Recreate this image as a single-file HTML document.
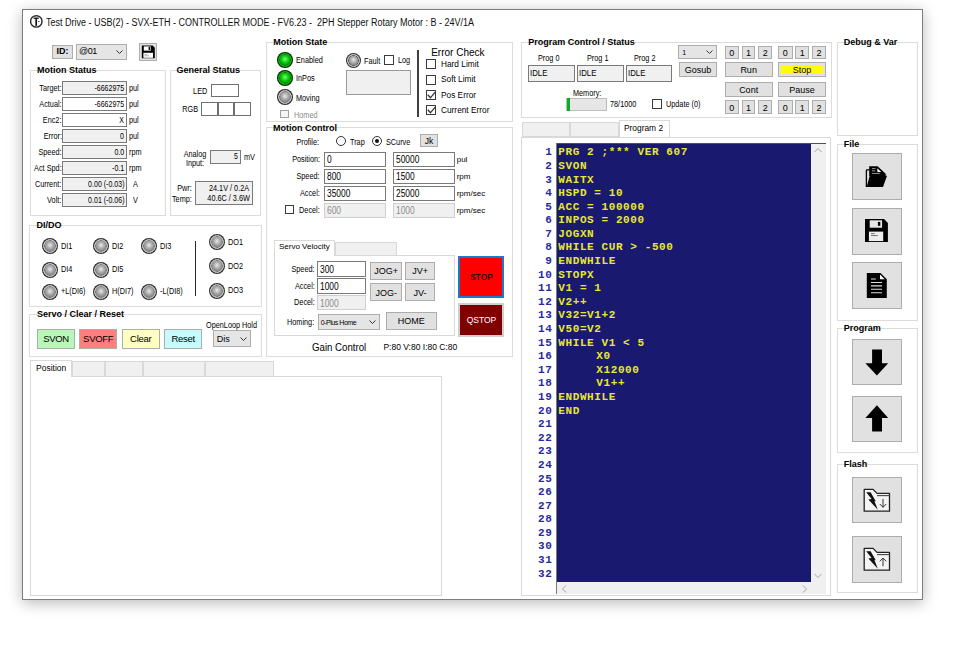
<!DOCTYPE html><html><head><meta charset="utf-8"><style>
*{margin:0;padding:0;box-sizing:border-box}
html,body{width:968px;height:646px;overflow:hidden;background:#fff;font-family:"Liberation Sans",sans-serif;color:#000}
body>div,body>svg{position:absolute}
.win{border:1px solid #7d7d7d;background:#fff;box-shadow:0 3px 14px rgba(0,0,0,0.28)}
.t{position:absolute;font-size:8px;line-height:0;white-space:nowrap}
.r{text-align:right}
.c{transform:translateX(-50%)}
.grp{border:1px solid #dcdcdc}
.gt{position:absolute;font-size:9px;font-weight:bold;background:#fff;padding:0 2px;line-height:0;white-space:nowrap}
.tb{border:1px solid #7a7a7a;font-size:8px;padding:0 2px;white-space:nowrap;overflow:hidden}
.btn{border:1px solid #adadad;background:#e1e1e1;font-size:9px;text-align:center;white-space:nowrap;overflow:hidden;padding-top:1px}
.led{border-radius:50%;background:radial-gradient(circle closest-side at 50% 50%,rgba(0,0,0,0) 64%,#5a5a5a 67%,#c4c4c4 73%,#acacac 83%,#3a3a3a 88%,#2a2a2a 100%),radial-gradient(circle closest-side at 50% 45%,#ececec 0%,#b8b8b8 35%,#8a8a8a 75%,#707070 100%)}
.led.g{background:radial-gradient(circle closest-side at 50% 50%,rgba(0,0,0,0) 64%,#005a00 67%,#10c010 73%,#00a000 83%,#0e3a0e 88%,#0a2a0a 100%),radial-gradient(circle closest-side at 50% 45%,#80ff80 0%,#22e022 35%,#00a000 75%,#008000 100%)}
.chk{border:1px solid #3c3c3c;background:#fff}
.dd{border:1px solid #adadad;background:#e5e5e5;font-size:8px;padding:0 3px;white-space:nowrap;overflow:hidden}
.tab{border:1px solid #d9d9d9;background:#f0f0f0}
.tabs{border:1px solid #d9d9d9;border-bottom:none;background:#fff}
.pan{border:1px solid #d9d9d9;background:#fff}
</style></head><body>
<div class="win" style="left:22.0px;top:9.0px;width:901.2px;height:590.5px;"></div>
<svg style="left:28px;top:13px" width="17" height="17" viewBox="28 13 17 17"><circle cx="36.3" cy="21.4" r="5.7" stroke="#2a2a2a" stroke-width="1.4" fill="none"/><path d="M33.6 18.2 H38.8" stroke="#111" stroke-width="1.3"/><path d="M36.2 18 V25.9" stroke="#111" stroke-width="1.7"/><path d="M38 21.5 h1.6" stroke="#444" stroke-width="0.9"/></svg>
<div class="t" style="left:46.3px;top:22.6px;font-size:10px;color:#111;transform:scaleX(0.9);transform-origin:0 0">Test Drive - USB(2) - SVX-ETH - CONTROLLER MODE - FV6.23 -&nbsp; 2PH Stepper Rotary Motor : B - 24V/1A</div>
<div class="btn" style="left:52.0px;top:45.0px;width:21.0px;height:14.0px;font-weight:bold;font-size:9px;line-height:11.5px;padding-top:0">ID:</div>
<div class="dd" style="left:76.0px;top:44.0px;width:51.0px;height:16.0px;line-height:13px;font-size:9px;letter-spacing:-0.5px;padding-left:2px">@01</div>
<svg style="position:absolute;left:115.5px;top:50.2px" width="7" height="4.5" viewBox="0 0 7 4.5"><path d="M0.5 0.5 L3.5 3.5 L6.5 0.5" stroke="#333" stroke-width="1" fill="none"/></svg>
<div class="btn" style="left:139.0px;top:43.0px;width:18.0px;height:18.0px;"></div>
<svg style="left:139px;top:43px" width="18" height="18" viewBox="139 43 18 18"><path d="M141.8 45.6 H152.6 L154.8 47.8 V58.2 H141.8 Z" fill="#000"/><rect x="143.8" y="46.4" width="7" height="4.2" fill="#fff"/><rect x="148.6" y="46.9" width="1.6" height="3" fill="#000"/><rect x="143.4" y="52.8" width="9.6" height="5" fill="#fff"/><path d="M144.4 54.3 h3 M144.4 55.8 h4.5" stroke="#777" stroke-width="0.6"/></svg>
<div class="grp" style="left:30.0px;top:70.0px;width:136.0px;height:146.0px;"></div>
<div class="gt" style="left:35.0px;top:70.2px;">Motion Status</div>
<div class="t r" style="right:906.5px;top:88.0px;font-size:8.4px;transform:scaleX(0.87);transform-origin:100% 0;">Target:</div>
<div class="tb" style="left:62.0px;top:81.0px;width:65.3px;height:14.0px;background:#f0f0f0;text-align:right;line-height:12.0px;font-size:8.8px;line-height:12.3px"><span style="display:inline-block;transform:scaleX(0.8);transform-origin:100% 50%">-6662975</span></div>
<div class="t" style="left:128.5px;top:88.2px;font-size:8.4px;transform:scaleX(0.87);transform-origin:0 0;">pul</div>
<div class="t r" style="right:906.5px;top:104.0px;font-size:8.4px;transform:scaleX(0.87);transform-origin:100% 0;">Actual:</div>
<div class="tb" style="left:62.0px;top:97.0px;width:65.3px;height:14.0px;background:#fff;text-align:right;line-height:12.0px;font-size:8.8px;line-height:12.3px"><span style="display:inline-block;transform:scaleX(0.8);transform-origin:100% 50%">-6662975</span></div>
<div class="t" style="left:128.5px;top:104.2px;font-size:8.4px;transform:scaleX(0.87);transform-origin:0 0;">pul</div>
<div class="t r" style="right:906.5px;top:120.0px;font-size:8.4px;transform:scaleX(0.87);transform-origin:100% 0;">Enc2:</div>
<div class="tb" style="left:62.0px;top:113.0px;width:65.3px;height:14.0px;background:#fff;text-align:right;line-height:12.0px;font-size:8.8px;line-height:12.3px"><span style="display:inline-block;transform:scaleX(0.8);transform-origin:100% 50%">X</span></div>
<div class="t" style="left:128.5px;top:120.2px;font-size:8.4px;transform:scaleX(0.87);transform-origin:0 0;">pul</div>
<div class="t r" style="right:906.5px;top:136.0px;font-size:8.4px;transform:scaleX(0.87);transform-origin:100% 0;">Error:</div>
<div class="tb" style="left:62.0px;top:129.0px;width:65.3px;height:14.0px;background:#f0f0f0;text-align:right;line-height:12.0px;font-size:8.8px;line-height:12.3px"><span style="display:inline-block;transform:scaleX(0.8);transform-origin:100% 50%">0</span></div>
<div class="t" style="left:128.5px;top:136.2px;font-size:8.4px;transform:scaleX(0.87);transform-origin:0 0;">pul</div>
<div class="t r" style="right:906.5px;top:152.0px;font-size:8.4px;transform:scaleX(0.87);transform-origin:100% 0;">Speed:</div>
<div class="tb" style="left:62.0px;top:145.0px;width:65.3px;height:14.0px;background:#f0f0f0;text-align:right;line-height:12.0px;font-size:8.8px;line-height:12.3px"><span style="display:inline-block;transform:scaleX(0.8);transform-origin:100% 50%">0.0</span></div>
<div class="t" style="left:128.5px;top:152.2px;font-size:8.4px;transform:scaleX(0.87);transform-origin:0 0;">rpm</div>
<div class="t r" style="right:906.5px;top:168.0px;font-size:8.4px;transform:scaleX(0.87);transform-origin:100% 0;">Act Spd:</div>
<div class="tb" style="left:62.0px;top:161.0px;width:65.3px;height:14.0px;background:#f0f0f0;text-align:right;line-height:12.0px;font-size:8.8px;line-height:12.3px"><span style="display:inline-block;transform:scaleX(0.8);transform-origin:100% 50%">-0.1</span></div>
<div class="t" style="left:128.5px;top:168.2px;font-size:8.4px;transform:scaleX(0.87);transform-origin:0 0;">rpm</div>
<div class="t r" style="right:906.5px;top:184.0px;font-size:8.4px;transform:scaleX(0.87);transform-origin:100% 0;">Current:</div>
<div class="tb" style="left:62.0px;top:177.0px;width:65.3px;height:14.0px;background:#f0f0f0;text-align:right;line-height:12.0px;font-size:8.8px;line-height:12.3px"><span style="display:inline-block;transform:scaleX(0.8);transform-origin:100% 50%">0.00 (-0.03)</span></div>
<div class="t" style="left:132.5px;top:184.2px;font-size:8.4px;transform:scaleX(0.87);transform-origin:0 0;">A</div>
<div class="t r" style="right:906.5px;top:200.0px;font-size:8.4px;transform:scaleX(0.87);transform-origin:100% 0;">Volt:</div>
<div class="tb" style="left:62.0px;top:193.0px;width:65.3px;height:14.0px;background:#f0f0f0;text-align:right;line-height:12.0px;font-size:8.8px;line-height:12.3px"><span style="display:inline-block;transform:scaleX(0.8);transform-origin:100% 50%">0.01 (-0.06)</span></div>
<div class="t" style="left:132.5px;top:200.2px;font-size:8.4px;transform:scaleX(0.87);transform-origin:0 0;">V</div>
<div class="grp" style="left:170.0px;top:70.0px;width:90.5px;height:146.0px;"></div>
<div class="gt" style="left:174.5px;top:70.2px;">General Status</div>
<div class="t r" style="right:760.5px;top:90.5px;font-size:8.4px;transform:scaleX(0.87);transform-origin:100% 0;">LED</div>
<div class="tb" style="left:211.0px;top:84.0px;width:28.0px;height:13.0px;background:#fff;border-color:#707070"></div>
<div class="t r" style="right:770.0px;top:109.0px;font-size:8.4px;transform:scaleX(0.87);transform-origin:100% 0;">RGB</div>
<div class="tb" style="left:201.0px;top:102.0px;width:16.6px;height:14.0px;background:#fff;border-color:#707070"></div>
<div class="tb" style="left:217.6px;top:102.0px;width:16.6px;height:14.0px;background:#fff;border-color:#707070"></div>
<div class="tb" style="left:234.2px;top:102.0px;width:16.6px;height:14.0px;background:#fff;border-color:#707070"></div>
<div class="t c" style="left:194.5px;top:153.5px;font-size:8.4px;transform:translateX(-50%) scaleX(0.87);">Analog</div>
<div class="t c" style="left:194.5px;top:162.5px;font-size:8.4px;transform:translateX(-50%) scaleX(0.87);">Input:</div>
<div class="tb" style="left:210.0px;top:150.0px;width:30.5px;height:13.5px;background:#f0f0f0;text-align:right;line-height:11.5px;font-size:8.8px;line-height:11px"><span style="display:inline-block;transform:scaleX(0.8);transform-origin:100% 50%">5</span></div>
<div class="t" style="left:244.0px;top:157.0px;font-size:8.4px;transform:scaleX(0.87);transform-origin:0 0;">mV</div>
<div class="t r" style="right:776.0px;top:188.0px;font-size:8.4px;transform:scaleX(0.87);transform-origin:100% 0;">Pwr:</div>
<div class="t r" style="right:776.0px;top:198.5px;font-size:8.4px;transform:scaleX(0.87);transform-origin:100% 0;">Temp:</div>
<div class="tb" style="left:195.0px;top:181.0px;width:57.5px;height:23.5px;background:#f0f0f0"></div>
<div class="t r" style="right:718.5px;top:187.5px;font-size:8.4px;transform:scaleX(0.87);transform-origin:100% 0;">24.1V / 0.2A</div>
<div class="t r" style="right:718.5px;top:197.5px;font-size:8.4px;transform:scaleX(0.87);transform-origin:100% 0;">40.6C / 3.6W</div>
<div class="grp" style="left:29.0px;top:225.0px;width:232.5px;height:82.0px;"></div>
<div class="gt" style="left:34.5px;top:225.2px;">DI/DO</div>
<div class="led" style="left:42.3px;top:238.0px;width:16.0px;height:16.0px;"></div>
<div class="t" style="left:60.8px;top:245.8px;font-size:8.4px;transform:scaleX(0.87);transform-origin:0 0;">DI1</div>
<div class="led" style="left:93.4px;top:238.0px;width:16.0px;height:16.0px;"></div>
<div class="t" style="left:111.9px;top:245.8px;font-size:8.4px;transform:scaleX(0.87);transform-origin:0 0;">DI2</div>
<div class="led" style="left:141.0px;top:238.0px;width:16.0px;height:16.0px;"></div>
<div class="t" style="left:159.5px;top:245.8px;font-size:8.4px;transform:scaleX(0.87);transform-origin:0 0;">DI3</div>
<div class="led" style="left:42.3px;top:261.5px;width:16.0px;height:16.0px;"></div>
<div class="t" style="left:60.8px;top:269.3px;font-size:8.4px;transform:scaleX(0.87);transform-origin:0 0;">DI4</div>
<div class="led" style="left:93.4px;top:261.5px;width:16.0px;height:16.0px;"></div>
<div class="t" style="left:111.9px;top:269.3px;font-size:8.4px;transform:scaleX(0.87);transform-origin:0 0;">DI5</div>
<div class="led" style="left:42.3px;top:283.5px;width:16.0px;height:16.0px;"></div>
<div class="t" style="left:60.8px;top:291.3px;font-size:8.4px;transform:scaleX(0.87);transform-origin:0 0;">+L(DI6)</div>
<div class="led" style="left:93.4px;top:283.5px;width:16.0px;height:16.0px;"></div>
<div class="t" style="left:111.9px;top:291.3px;font-size:8.4px;transform:scaleX(0.87);transform-origin:0 0;">H(DI7)</div>
<div class="led" style="left:141.0px;top:283.5px;width:16.0px;height:16.0px;"></div>
<div class="t" style="left:159.5px;top:291.3px;font-size:8.4px;transform:scaleX(0.87);transform-origin:0 0;">-L(DI8)</div>
<div class="led" style="left:209.4px;top:234.4px;width:16.0px;height:16.0px;"></div>
<div class="t" style="left:228.4px;top:241.9px;font-size:8.4px;transform:scaleX(0.87);transform-origin:0 0;">DO1</div>
<div class="led" style="left:209.4px;top:258.2px;width:16.0px;height:16.0px;"></div>
<div class="t" style="left:228.4px;top:265.7px;font-size:8.4px;transform:scaleX(0.87);transform-origin:0 0;">DO2</div>
<div class="led" style="left:209.4px;top:282.5px;width:16.0px;height:16.0px;"></div>
<div class="t" style="left:228.4px;top:290.0px;font-size:8.4px;transform:scaleX(0.87);transform-origin:0 0;">DO3</div>
<div class="" style="left:195.2px;top:240.5px;width:1.2px;height:55.0px;background:#2a2a2a"></div>
<div class="grp" style="left:29.0px;top:314.0px;width:232.5px;height:43.0px;"></div>
<div class="gt" style="left:35.0px;top:314.2px;">Servo / Clear / Reset</div>
<div class="btn" style="left:37.0px;top:328.6px;width:38.0px;height:20.0px;line-height:18.0px;background:#b8f7b8;font-size:9.5px;letter-spacing:-0.3px;padding-top:0.3px">SVON</div>
<div class="btn" style="left:79.0px;top:328.6px;width:38.4px;height:20.0px;line-height:18.0px;background:#ff7f7f;font-size:9.5px;letter-spacing:-0.3px;padding-top:0.3px">SVOFF</div>
<div class="btn" style="left:121.7px;top:328.6px;width:38.0px;height:20.0px;line-height:18.0px;background:#ffffc0;font-size:9.5px;letter-spacing:-0.3px;padding-top:0.3px">Clear</div>
<div class="btn" style="left:164.2px;top:328.6px;width:38.0px;height:20.0px;line-height:18.0px;background:#c6fafd;font-size:9.5px;letter-spacing:-0.3px;padding-top:0.3px">Reset</div>
<div class="t" style="left:205.5px;top:324.5px;font-size:8.4px;transform:scaleX(0.87);transform-origin:0 0;">OpenLoop Hold</div>
<div class="dd" style="left:212.8px;top:330.0px;width:38.0px;height:17.0px;line-height:16.5px;font-size:9px">Dis</div>
<svg style="position:absolute;left:240.0px;top:336.8px" width="7" height="4.5" viewBox="0 0 7 4.5"><path d="M0.5 0.5 L3.5 3.5 L6.5 0.5" stroke="#333" stroke-width="1" fill="none"/></svg>
<div class="pan" style="left:30.0px;top:376.0px;width:412.0px;height:219.5px;"></div>
<div class="tab" style="left:71.8px;top:361.0px;width:32.9px;height:15.5px;"></div>
<div class="tab" style="left:104.7px;top:361.0px;width:38.0px;height:15.5px;"></div>
<div class="tab" style="left:142.7px;top:361.0px;width:62.0px;height:15.5px;"></div>
<div class="tab" style="left:204.7px;top:361.0px;width:69.2px;height:15.5px;"></div>
<div class="tabs" style="left:30.0px;top:359.5px;width:41.8px;height:17.5px;"></div>
<div class="t" style="left:36.0px;top:367.8px;font-size:8.5px">Position</div>
<div class="grp" style="left:265.6px;top:41.8px;width:247.4px;height:80.0px;"></div>
<div class="gt" style="left:271.2px;top:42.0px;">Motion State</div>
<div class="led g" style="left:277.0px;top:52.0px;width:15.6px;height:15.6px;"></div>
<div class="t" style="left:295.9px;top:60.0px;font-size:8.4px;transform:scaleX(0.87);transform-origin:0 0;">Enabled</div>
<div class="led g" style="left:277.0px;top:70.1px;width:15.6px;height:15.6px;"></div>
<div class="t" style="left:295.9px;top:78.0px;font-size:8.4px;transform:scaleX(0.87);transform-origin:0 0;">InPos</div>
<div class="led" style="left:277.0px;top:89.2px;width:15.6px;height:15.6px;"></div>
<div class="t" style="left:295.9px;top:97.5px;font-size:8.4px;transform:scaleX(0.87);transform-origin:0 0;">Moving</div>
<div class="chk" style="left:280.2px;top:109.7px;width:8.8px;height:8.8px;border-color:#a0a0a0;background:#f5f5f5"></div>
<div class="t" style="left:293.9px;top:114.5px;font-size:8.4px;transform:scaleX(0.87);transform-origin:0 0;color:#8a8a8a">Homed</div>
<div class="led" style="left:345.6px;top:52.8px;width:15.6px;height:15.6px;"></div>
<div class="t" style="left:364.0px;top:61.0px;font-size:8.4px;transform:scaleX(0.87);transform-origin:0 0;">Fault</div>
<div class="chk" style="left:384.0px;top:55.3px;width:10.2px;height:10.2px;"></div>
<div class="t" style="left:398.4px;top:59.8px;font-size:8.4px;transform:scaleX(0.87);transform-origin:0 0;">Log</div>
<div class="tb" style="left:345.5px;top:70.2px;width:65.5px;height:24.8px;background:#f0f0f0;border-color:#9a9a9a"></div>
<div class="" style="left:416.8px;top:49.8px;width:1.8px;height:67.5px;background:#404040"></div>
<div class="t" style="left:431.2px;top:52.5px;font-size:10px">Error Check</div>
<div class="chk" style="left:425.5px;top:59.4px;width:10.0px;height:10.0px;"></div>
<div class="t" style="left:441.0px;top:64.0px;font-size:8.3px">Hard Limit</div>
<div class="chk" style="left:425.5px;top:74.7px;width:10.0px;height:10.0px;"></div>
<div class="t" style="left:441.0px;top:79.2px;font-size:8.3px">Soft Limit</div>
<div class="chk" style="left:425.5px;top:89.9px;width:10.0px;height:10.0px;"><svg width="10" height="10" viewBox="0 0 10 10" style="position:absolute;left:-1px;top:-1px"><path d="M1.8 4.8 L4.4 7.8 L9.2 2.2" stroke="#333" stroke-width="1.3" fill="none"/></svg></div>
<div class="t" style="left:441.0px;top:94.5px;font-size:8.3px">Pos Error</div>
<div class="chk" style="left:425.5px;top:105.2px;width:10.0px;height:10.0px;"><svg width="10" height="10" viewBox="0 0 10 10" style="position:absolute;left:-1px;top:-1px"><path d="M1.8 4.8 L4.4 7.8 L9.2 2.2" stroke="#333" stroke-width="1.3" fill="none"/></svg></div>
<div class="t" style="left:441.0px;top:109.8px;font-size:8.3px">Current Error</div>
<div class="grp" style="left:265.7px;top:127.3px;width:247.5px;height:229.7px;"></div>
<div class="gt" style="left:271.0px;top:127.5px;">Motion Control</div>
<div class="t r" style="right:648.5px;top:141.8px;font-size:8.4px;transform:scaleX(0.87);transform-origin:100% 0;">Profile:</div>
<div class="" style="left:335.8px;top:136.4px;width:10.0px;height:10.0px;border:1px solid #333;border-radius:50%;background:#fff"></div>
<div class="t" style="left:350.2px;top:142.0px;font-size:8.4px;transform:scaleX(0.87);transform-origin:0 0;">Trap</div>
<div class="" style="left:371.9px;top:136.4px;width:10.0px;height:10.0px;border:1px solid #333;border-radius:50%;background:#fff"></div>
<div class="" style="left:374.9px;top:139.4px;width:4.0px;height:4.0px;border-radius:50%;background:#111"></div>
<div class="t" style="left:386.3px;top:142.0px;font-size:8.4px;transform:scaleX(0.87);transform-origin:0 0;">SCurve</div>
<div class="btn" style="left:420.2px;top:133.8px;width:17.8px;height:13.5px;line-height:11.5px;font-size:8.5px;line-height:11px">Jk</div>
<div class="t r" style="right:648.0px;top:159.1px;font-size:8.4px;transform:scaleX(0.87);transform-origin:100% 0;">Position:</div>
<div class="tb" style="left:324.1px;top:151.6px;width:62.2px;height:15.0px;background:#fff;text-align:left;line-height:13.0px;font-size:10px;line-height:14px;"><span style="display:inline-block;transform:scaleX(0.84);transform-origin:0 50%">0</span></div>
<div class="tb" style="left:393.0px;top:151.6px;width:61.8px;height:15.0px;background:#fff;text-align:left;line-height:13.0px;font-size:10px;line-height:14px;"><span style="display:inline-block;transform:scaleX(0.84);transform-origin:0 50%">50000</span></div>
<div class="t" style="left:456.7px;top:160.1px;font-size:8px">pul</div>
<div class="t r" style="right:648.0px;top:176.1px;font-size:8.4px;transform:scaleX(0.87);transform-origin:100% 0;">Speed:</div>
<div class="tb" style="left:324.1px;top:168.6px;width:62.2px;height:15.0px;background:#fff;text-align:left;line-height:13.0px;font-size:10px;line-height:14px;"><span style="display:inline-block;transform:scaleX(0.84);transform-origin:0 50%">800</span></div>
<div class="tb" style="left:393.0px;top:168.6px;width:61.8px;height:15.0px;background:#fff;text-align:left;line-height:13.0px;font-size:10px;line-height:14px;"><span style="display:inline-block;transform:scaleX(0.84);transform-origin:0 50%">1500</span></div>
<div class="t" style="left:456.7px;top:177.1px;font-size:8px">rpm</div>
<div class="t r" style="right:648.0px;top:193.1px;font-size:8.4px;transform:scaleX(0.87);transform-origin:100% 0;">Accel:</div>
<div class="tb" style="left:324.1px;top:185.6px;width:62.2px;height:15.0px;background:#fff;text-align:left;line-height:13.0px;font-size:10px;line-height:14px;"><span style="display:inline-block;transform:scaleX(0.84);transform-origin:0 50%">35000</span></div>
<div class="tb" style="left:393.0px;top:185.6px;width:61.8px;height:15.0px;background:#fff;text-align:left;line-height:13.0px;font-size:10px;line-height:14px;"><span style="display:inline-block;transform:scaleX(0.84);transform-origin:0 50%">25000</span></div>
<div class="t" style="left:456.7px;top:194.1px;font-size:8px">rpm/sec</div>
<div class="t r" style="right:648.0px;top:210.1px;font-size:8.4px;transform:scaleX(0.87);transform-origin:100% 0;">Decel:</div>
<div class="tb" style="left:324.1px;top:202.6px;width:62.2px;height:15.0px;background:#f0f0f0;text-align:left;line-height:13.0px;font-size:10px;line-height:14px;color:#8c8c8c;border-color:#cfcfcf;"><span style="display:inline-block;transform:scaleX(0.84);transform-origin:0 50%">600</span></div>
<div class="tb" style="left:393.0px;top:202.6px;width:61.8px;height:15.0px;background:#f0f0f0;text-align:left;line-height:13.0px;font-size:10px;line-height:14px;color:#8c8c8c;border-color:#cfcfcf;"><span style="display:inline-block;transform:scaleX(0.84);transform-origin:0 50%">1000</span></div>
<div class="t" style="left:456.7px;top:211.1px;font-size:8px">rpm/sec</div>
<div class="chk" style="left:285.3px;top:205.2px;width:9.2px;height:8.8px;"></div>
<div class="pan" style="left:273.7px;top:255.3px;width:181.1px;height:81.2px;"></div>
<div class="tab" style="left:335.4px;top:242.0px;width:61.4px;height:13.8px;"></div>
<div class="tabs" style="left:273.7px;top:240.0px;width:61.7px;height:16.3px;"></div>
<div class="t" style="left:279.0px;top:247.0px;font-size:8px">Servo Velocity</div>
<div class="t r" style="right:653.5px;top:268.5px;font-size:8.4px;transform:scaleX(0.87);transform-origin:100% 0;">Speed:</div>
<div class="tb" style="left:317.3px;top:260.8px;width:48.3px;height:15.9px;background:#fff;text-align:left;line-height:13.9px;font-size:10px;line-height:16px"><span style="display:inline-block;transform:scaleX(0.84);transform-origin:0 50%">300</span></div>
<div class="t r" style="right:653.5px;top:285.5px;font-size:8.4px;transform:scaleX(0.87);transform-origin:100% 0;">Accel:</div>
<div class="tb" style="left:317.3px;top:278.3px;width:48.3px;height:15.3px;background:#fff;text-align:left;line-height:13.3px;font-size:10px;line-height:16px"><span style="display:inline-block;transform:scaleX(0.84);transform-origin:0 50%">1000</span></div>
<div class="t r" style="right:653.5px;top:302.0px;font-size:8.4px;transform:scaleX(0.87);transform-origin:100% 0;">Decel:</div>
<div class="tb" style="left:317.3px;top:294.8px;width:48.3px;height:15.7px;background:#f0f0f0;text-align:left;line-height:13.7px;font-size:10px;line-height:16px;color:#8c8c8c;border-color:#cfcfcf"><span style="display:inline-block;transform:scaleX(0.84);transform-origin:0 50%">1000</span></div>
<div class="btn" style="left:370.2px;top:261.8px;width:32.0px;height:17.9px;line-height:15.9px;">JOG+</div>
<div class="btn" style="left:405.1px;top:261.8px;width:29.9px;height:17.9px;line-height:15.9px;">JV+</div>
<div class="btn" style="left:370.2px;top:282.6px;width:32.0px;height:18.0px;line-height:16.0px;">JOG-</div>
<div class="btn" style="left:405.1px;top:282.6px;width:29.9px;height:18.0px;line-height:16.0px;">JV-</div>
<div class="t r" style="right:653.5px;top:322.0px;font-size:8.4px;transform:scaleX(0.87);transform-origin:100% 0;">Homing:</div>
<div class="dd" style="left:317.7px;top:313.5px;width:62.0px;height:16.7px;line-height:15.5px;font-size:7px;letter-spacing:-0.45px;padding-left:2px">0-Plus Home</div>
<svg style="position:absolute;left:369.0px;top:319.8px" width="7" height="4.5" viewBox="0 0 7 4.5"><path d="M0.5 0.5 L3.5 3.5 L6.5 0.5" stroke="#333" stroke-width="1" fill="none"/></svg>
<div class="btn" style="left:385.5px;top:312.1px;width:51.5px;height:17.8px;line-height:15.8px;">HOME</div>
<div class="" style="left:458.4px;top:256.1px;width:46.1px;height:41.8px;border:2px solid #1979ca;background:#ff0000;font-size:8.5px;text-align:center;line-height:38px;color:#300000;font-weight:bold">STOP</div>
<div class="" style="left:458.4px;top:302.5px;width:46.1px;height:34.0px;border:2px solid #cfcfcf;background:#800000;font-size:8.5px;text-align:center;line-height:30px;color:#fff">QSTOP</div>
<div class="t" style="left:311.7px;top:347.0px;font-size:10.5px;transform:scaleX(0.92);transform-origin:0 0">Gain Control</div>
<div class="t" style="left:383.4px;top:346.5px;font-size:8.5px">P:80 V:80 I:80 C:80</div>
<div class="grp" style="left:521.3px;top:41.9px;width:310.9px;height:75.8px;"></div>
<div class="gt" style="left:526.2px;top:42.1px;">Program Control / Status</div>
<div class="t" style="left:537.8px;top:58.0px;font-size:8.4px;transform:scaleX(0.87);transform-origin:0 0;">Prog 0</div>
<div class="tb" style="left:528.2px;top:65.0px;width:46.5px;height:16.6px;background:#f0f0f0;text-align:left;line-height:14.6px;font-size:9.2px;padding-left:1px;line-height:15.5px"><span style="display:inline-block;transform:scaleX(0.85);transform-origin:0 50%">IDLE</span></div>
<div class="t" style="left:587.1px;top:58.0px;font-size:8.4px;transform:scaleX(0.87);transform-origin:0 0;">Prog 1</div>
<div class="tb" style="left:577.0px;top:65.0px;width:46.8px;height:16.6px;background:#f0f0f0;text-align:left;line-height:14.6px;font-size:9.2px;padding-left:1px;line-height:15.5px"><span style="display:inline-block;transform:scaleX(0.85);transform-origin:0 50%">IDLE</span></div>
<div class="t" style="left:633.7px;top:58.0px;font-size:8.4px;transform:scaleX(0.87);transform-origin:0 0;">Prog 2</div>
<div class="tb" style="left:625.8px;top:65.0px;width:46.7px;height:16.6px;background:#f0f0f0;text-align:left;line-height:14.6px;font-size:9.2px;padding-left:1px;line-height:15.5px"><span style="display:inline-block;transform:scaleX(0.85);transform-origin:0 50%">IDLE</span></div>
<div class="t" style="left:573.0px;top:93.0px;font-size:8.4px;transform:scaleX(0.87);transform-origin:0 0;">Memory:</div>
<div class="" style="left:566.3px;top:98.1px;width:40.5px;height:13.2px;border:1px solid #bcbcbc;background:#e6e6e6"></div>
<div class="" style="left:566.6px;top:98.4px;width:3.4px;height:12.6px;background:#06b025"></div>
<div class="t" style="left:609.7px;top:104.0px;font-size:8.4px;transform:scaleX(0.87);transform-origin:0 0;">78/1000</div>
<div class="chk" style="left:651.6px;top:99.4px;width:10.0px;height:10.0px;"></div>
<div class="t" style="left:665.5px;top:104.3px;font-size:8.4px;transform:scaleX(0.87);transform-origin:0 0;">Update (0)</div>
<div class="dd" style="left:678.2px;top:44.9px;width:39.3px;height:13.9px;line-height:13px;font-size:7px">1</div>
<svg style="position:absolute;left:706.0px;top:50.2px" width="7" height="4.5" viewBox="0 0 7 4.5"><path d="M0.5 0.5 L3.5 3.5 L6.5 0.5" stroke="#333" stroke-width="1" fill="none"/></svg>
<div class="btn" style="left:679.3px;top:61.9px;width:37.6px;height:15.5px;line-height:13.5px;">Gosub</div>
<div class="btn" style="left:724.7px;top:45.7px;width:14.1px;height:13.7px;line-height:11.7px;font-size:9px">0</div>
<div class="btn" style="left:724.7px;top:99.5px;width:14.1px;height:14.0px;line-height:12.0px;font-size:9px">0</div>
<div class="btn" style="left:741.7px;top:45.7px;width:13.6px;height:13.7px;line-height:11.7px;font-size:9px">1</div>
<div class="btn" style="left:741.7px;top:99.5px;width:13.6px;height:14.0px;line-height:12.0px;font-size:9px">1</div>
<div class="btn" style="left:758.2px;top:45.7px;width:14.0px;height:13.7px;line-height:11.7px;font-size:9px">2</div>
<div class="btn" style="left:758.2px;top:99.5px;width:14.0px;height:14.0px;line-height:12.0px;font-size:9px">2</div>
<div class="btn" style="left:778.0px;top:45.7px;width:14.5px;height:13.7px;line-height:11.7px;font-size:9px">0</div>
<div class="btn" style="left:778.0px;top:99.5px;width:14.5px;height:14.0px;line-height:12.0px;font-size:9px">0</div>
<div class="btn" style="left:795.0px;top:45.7px;width:14.4px;height:13.7px;line-height:11.7px;font-size:9px">1</div>
<div class="btn" style="left:795.0px;top:99.5px;width:14.4px;height:14.0px;line-height:12.0px;font-size:9px">1</div>
<div class="btn" style="left:811.9px;top:45.7px;width:14.1px;height:13.7px;line-height:11.7px;font-size:9px">2</div>
<div class="btn" style="left:811.9px;top:99.5px;width:14.1px;height:14.0px;line-height:12.0px;font-size:9px">2</div>
<div class="btn" style="left:724.7px;top:61.9px;width:47.9px;height:15.5px;line-height:13.5px;">Run</div>
<div class="btn" style="left:724.7px;top:81.5px;width:47.9px;height:15.5px;line-height:13.5px;">Cont</div>
<div class="btn" style="left:778.0px;top:61.9px;width:48.0px;height:15.5px;line-height:13.5px;background:#ffff00;box-shadow:inset 0 0 0 2px #e1e1e1">Stop</div>
<div class="btn" style="left:778.0px;top:81.5px;width:48.0px;height:15.5px;line-height:13.5px;">Pause</div>
<div class="pan" style="left:521.0px;top:136.8px;width:310.0px;height:459.7px;"></div>
<div class="tab" style="left:522.4px;top:121.9px;width:48.0px;height:15.4px;"></div>
<div class="tab" style="left:570.4px;top:121.9px;width:48.4px;height:15.4px;"></div>
<div class="tabs" style="left:618.8px;top:120.2px;width:51.2px;height:17.3px;"></div>
<div class="t" style="left:624.0px;top:127.8px;font-size:9px;transform:scaleX(0.93);transform-origin:0 0">Program 2</div>
<div class="" style="left:556.5px;top:143.0px;width:269.5px;height:451.0px;background:#f0f0f0"></div>
<div class="" style="left:556.5px;top:143.5px;width:254.7px;height:438.3px;background:#191970"></div>
<div class="" style="left:555.5px;top:142.8px;width:270.3px;height:1.0px;background:#505050"></div>
<div class="" style="left:555.5px;top:142.8px;width:1.0px;height:451.2px;background:#7a7a7a"></div>
<svg style="left:813px;top:147px" width="10" height="6" viewBox="0 0 10 6"><path d="M1.5 5 L5 1.5 L8.5 5" stroke="#a6a6a6" stroke-width="1" fill="none"/></svg>
<svg style="left:813px;top:573px" width="10" height="6" viewBox="0 0 10 6"><path d="M1.5 1 L5 4.5 L8.5 1" stroke="#a6a6a6" stroke-width="1" fill="none"/></svg>
<svg style="left:561px;top:584px" width="6" height="10" viewBox="0 0 6 10"><path d="M5 1.5 L1.5 5 L5 8.5" stroke="#a6a6a6" stroke-width="1" fill="none"/></svg>
<svg style="left:802px;top:584px" width="6" height="10" viewBox="0 0 6 10"><path d="M1 1.5 L4.5 5 L1 8.5" stroke="#a6a6a6" stroke-width="1" fill="none"/></svg>
<div class="t r" style="right:415.6px;top:152.3px;font-family:'Liberation Mono',monospace;font-size:11px;font-weight:bold;letter-spacing:0.6px;color:#2a2aa0">1</div>
<div class="t" style="left:558.3px;top:152.3px;font-family:'Liberation Mono',monospace;font-weight:bold;font-size:11px;letter-spacing:0.6px;color:#e8e830;">PRG 2 ;*** VER 607</div>
<div class="t r" style="right:415.6px;top:165.9px;font-family:'Liberation Mono',monospace;font-size:11px;font-weight:bold;letter-spacing:0.6px;color:#2a2aa0">2</div>
<div class="t" style="left:558.3px;top:165.9px;font-family:'Liberation Mono',monospace;font-weight:bold;font-size:11px;letter-spacing:0.6px;color:#e8e830;">SVON</div>
<div class="t r" style="right:415.6px;top:179.5px;font-family:'Liberation Mono',monospace;font-size:11px;font-weight:bold;letter-spacing:0.6px;color:#2a2aa0">3</div>
<div class="t" style="left:558.3px;top:179.5px;font-family:'Liberation Mono',monospace;font-weight:bold;font-size:11px;letter-spacing:0.6px;color:#e8e830;">WAITX</div>
<div class="t r" style="right:415.6px;top:193.1px;font-family:'Liberation Mono',monospace;font-size:11px;font-weight:bold;letter-spacing:0.6px;color:#2a2aa0">4</div>
<div class="t" style="left:558.3px;top:193.1px;font-family:'Liberation Mono',monospace;font-weight:bold;font-size:11px;letter-spacing:0.6px;color:#e8e830;">HSPD = 10</div>
<div class="t r" style="right:415.6px;top:206.7px;font-family:'Liberation Mono',monospace;font-size:11px;font-weight:bold;letter-spacing:0.6px;color:#2a2aa0">5</div>
<div class="t" style="left:558.3px;top:206.7px;font-family:'Liberation Mono',monospace;font-weight:bold;font-size:11px;letter-spacing:0.6px;color:#e8e830;">ACC = 100000</div>
<div class="t r" style="right:415.6px;top:220.2px;font-family:'Liberation Mono',monospace;font-size:11px;font-weight:bold;letter-spacing:0.6px;color:#2a2aa0">6</div>
<div class="t" style="left:558.3px;top:220.2px;font-family:'Liberation Mono',monospace;font-weight:bold;font-size:11px;letter-spacing:0.6px;color:#e8e830;">INPOS = 2000</div>
<div class="t r" style="right:415.6px;top:233.8px;font-family:'Liberation Mono',monospace;font-size:11px;font-weight:bold;letter-spacing:0.6px;color:#2a2aa0">7</div>
<div class="t" style="left:558.3px;top:233.8px;font-family:'Liberation Mono',monospace;font-weight:bold;font-size:11px;letter-spacing:0.6px;color:#e8e830;">JOGXN</div>
<div class="t r" style="right:415.6px;top:247.4px;font-family:'Liberation Mono',monospace;font-size:11px;font-weight:bold;letter-spacing:0.6px;color:#2a2aa0">8</div>
<div class="t" style="left:558.3px;top:247.4px;font-family:'Liberation Mono',monospace;font-weight:bold;font-size:11px;letter-spacing:0.6px;color:#e8e830;">WHILE CUR &gt; -500</div>
<div class="t r" style="right:415.6px;top:261.0px;font-family:'Liberation Mono',monospace;font-size:11px;font-weight:bold;letter-spacing:0.6px;color:#2a2aa0">9</div>
<div class="t" style="left:558.3px;top:261.0px;font-family:'Liberation Mono',monospace;font-weight:bold;font-size:11px;letter-spacing:0.6px;color:#e8e830;">ENDWHILE</div>
<div class="t r" style="right:415.6px;top:274.6px;font-family:'Liberation Mono',monospace;font-size:11px;font-weight:bold;letter-spacing:0.6px;color:#2a2aa0">10</div>
<div class="t" style="left:558.3px;top:274.6px;font-family:'Liberation Mono',monospace;font-weight:bold;font-size:11px;letter-spacing:0.6px;color:#e8e830;">STOPX</div>
<div class="t r" style="right:415.6px;top:288.2px;font-family:'Liberation Mono',monospace;font-size:11px;font-weight:bold;letter-spacing:0.6px;color:#2a2aa0">11</div>
<div class="t" style="left:558.3px;top:288.2px;font-family:'Liberation Mono',monospace;font-weight:bold;font-size:11px;letter-spacing:0.6px;color:#e8e830;">V1 = 1</div>
<div class="t r" style="right:415.6px;top:301.8px;font-family:'Liberation Mono',monospace;font-size:11px;font-weight:bold;letter-spacing:0.6px;color:#2a2aa0">12</div>
<div class="t" style="left:558.3px;top:301.8px;font-family:'Liberation Mono',monospace;font-weight:bold;font-size:11px;letter-spacing:0.6px;color:#e8e830;">V2++</div>
<div class="t r" style="right:415.6px;top:315.4px;font-family:'Liberation Mono',monospace;font-size:11px;font-weight:bold;letter-spacing:0.6px;color:#2a2aa0">13</div>
<div class="t" style="left:558.3px;top:315.4px;font-family:'Liberation Mono',monospace;font-weight:bold;font-size:11px;letter-spacing:0.6px;color:#e8e830;">V32=V1+2</div>
<div class="t r" style="right:415.6px;top:329.0px;font-family:'Liberation Mono',monospace;font-size:11px;font-weight:bold;letter-spacing:0.6px;color:#2a2aa0">14</div>
<div class="t" style="left:558.3px;top:329.0px;font-family:'Liberation Mono',monospace;font-weight:bold;font-size:11px;letter-spacing:0.6px;color:#e8e830;">V50=V2</div>
<div class="t r" style="right:415.6px;top:342.6px;font-family:'Liberation Mono',monospace;font-size:11px;font-weight:bold;letter-spacing:0.6px;color:#2a2aa0">15</div>
<div class="t" style="left:558.3px;top:342.6px;font-family:'Liberation Mono',monospace;font-weight:bold;font-size:11px;letter-spacing:0.6px;color:#e8e830;">WHILE V1 &lt; 5</div>
<div class="t r" style="right:415.6px;top:356.1px;font-family:'Liberation Mono',monospace;font-size:11px;font-weight:bold;letter-spacing:0.6px;color:#2a2aa0">16</div>
<div class="t" style="left:558.3px;top:356.1px;font-family:'Liberation Mono',monospace;font-weight:bold;font-size:11px;letter-spacing:0.6px;color:#e8e830;padding-left:2px;">&nbsp;&nbsp;&nbsp;&nbsp;&nbsp;X0</div>
<div class="t r" style="right:415.6px;top:369.7px;font-family:'Liberation Mono',monospace;font-size:11px;font-weight:bold;letter-spacing:0.6px;color:#2a2aa0">17</div>
<div class="t" style="left:558.3px;top:369.7px;font-family:'Liberation Mono',monospace;font-weight:bold;font-size:11px;letter-spacing:0.6px;color:#e8e830;padding-left:2px;">&nbsp;&nbsp;&nbsp;&nbsp;&nbsp;X12000</div>
<div class="t r" style="right:415.6px;top:383.3px;font-family:'Liberation Mono',monospace;font-size:11px;font-weight:bold;letter-spacing:0.6px;color:#2a2aa0">18</div>
<div class="t" style="left:558.3px;top:383.3px;font-family:'Liberation Mono',monospace;font-weight:bold;font-size:11px;letter-spacing:0.6px;color:#e8e830;padding-left:2px;">&nbsp;&nbsp;&nbsp;&nbsp;&nbsp;V1++</div>
<div class="t r" style="right:415.6px;top:396.9px;font-family:'Liberation Mono',monospace;font-size:11px;font-weight:bold;letter-spacing:0.6px;color:#2a2aa0">19</div>
<div class="t" style="left:558.3px;top:396.9px;font-family:'Liberation Mono',monospace;font-weight:bold;font-size:11px;letter-spacing:0.6px;color:#e8e830;">ENDWHILE</div>
<div class="t r" style="right:415.6px;top:410.5px;font-family:'Liberation Mono',monospace;font-size:11px;font-weight:bold;letter-spacing:0.6px;color:#2a2aa0">20</div>
<div class="t" style="left:558.3px;top:410.5px;font-family:'Liberation Mono',monospace;font-weight:bold;font-size:11px;letter-spacing:0.6px;color:#e8e830;">END</div>
<div class="t r" style="right:415.6px;top:424.1px;font-family:'Liberation Mono',monospace;font-size:11px;font-weight:bold;letter-spacing:0.6px;color:#2a2aa0">21</div>
<div class="t r" style="right:415.6px;top:437.7px;font-family:'Liberation Mono',monospace;font-size:11px;font-weight:bold;letter-spacing:0.6px;color:#2a2aa0">22</div>
<div class="t r" style="right:415.6px;top:451.3px;font-family:'Liberation Mono',monospace;font-size:11px;font-weight:bold;letter-spacing:0.6px;color:#2a2aa0">23</div>
<div class="t r" style="right:415.6px;top:464.9px;font-family:'Liberation Mono',monospace;font-size:11px;font-weight:bold;letter-spacing:0.6px;color:#2a2aa0">24</div>
<div class="t r" style="right:415.6px;top:478.5px;font-family:'Liberation Mono',monospace;font-size:11px;font-weight:bold;letter-spacing:0.6px;color:#2a2aa0">25</div>
<div class="t r" style="right:415.6px;top:492.1px;font-family:'Liberation Mono',monospace;font-size:11px;font-weight:bold;letter-spacing:0.6px;color:#2a2aa0">26</div>
<div class="t r" style="right:415.6px;top:505.6px;font-family:'Liberation Mono',monospace;font-size:11px;font-weight:bold;letter-spacing:0.6px;color:#2a2aa0">27</div>
<div class="t r" style="right:415.6px;top:519.2px;font-family:'Liberation Mono',monospace;font-size:11px;font-weight:bold;letter-spacing:0.6px;color:#2a2aa0">28</div>
<div class="t r" style="right:415.6px;top:532.8px;font-family:'Liberation Mono',monospace;font-size:11px;font-weight:bold;letter-spacing:0.6px;color:#2a2aa0">29</div>
<div class="t r" style="right:415.6px;top:546.4px;font-family:'Liberation Mono',monospace;font-size:11px;font-weight:bold;letter-spacing:0.6px;color:#2a2aa0">30</div>
<div class="t r" style="right:415.6px;top:560.0px;font-family:'Liberation Mono',monospace;font-size:11px;font-weight:bold;letter-spacing:0.6px;color:#2a2aa0">31</div>
<div class="t r" style="right:415.6px;top:573.6px;font-family:'Liberation Mono',monospace;font-size:11px;font-weight:bold;letter-spacing:0.6px;color:#2a2aa0">32</div>
<div class="grp" style="left:837.4px;top:41.8px;width:80.5px;height:94.2px;"></div>
<div class="gt" style="left:841.7px;top:42.0px;">Debug &amp; Var</div>
<div class="grp" style="left:837.4px;top:143.5px;width:80.5px;height:177.0px;"></div>
<div class="gt" style="left:841.7px;top:143.7px;">File</div>
<div class="btn" style="left:852.0px;top:153.2px;width:49.5px;height:47.1px;line-height:45.1px;"></div>
<div class="btn" style="left:852.0px;top:207.6px;width:49.5px;height:47.1px;line-height:45.1px;"></div>
<div class="btn" style="left:852.0px;top:262.0px;width:49.5px;height:47.0px;line-height:45.0px;"></div>
<div class="grp" style="left:837.4px;top:328.2px;width:80.5px;height:125.3px;"></div>
<div class="gt" style="left:841.7px;top:328.4px;">Program</div>
<div class="btn" style="left:852.0px;top:339.2px;width:49.8px;height:45.4px;line-height:43.4px;"></div>
<div class="btn" style="left:852.0px;top:395.6px;width:49.8px;height:46.3px;line-height:44.3px;"></div>
<div class="grp" style="left:837.4px;top:463.9px;width:80.5px;height:129.6px;"></div>
<div class="gt" style="left:841.7px;top:464.1px;">Flash</div>
<div class="btn" style="left:852.0px;top:477.1px;width:49.8px;height:45.9px;line-height:43.9px;"></div>
<div class="btn" style="left:852.0px;top:536.2px;width:49.8px;height:46.4px;line-height:44.4px;"></div>
<svg style="left:860px;top:160px" width="35" height="32" viewBox="860 160 35 32"><g transform="translate(860,160)"><path d="M6.4 27 V10.4 Q6.4 9.9 7 9.9 H9.5" stroke="#000" stroke-width="1.3" fill="none"/><path d="M9.2 6.2 H17.6 L25.7 13.8 V16 H9.2 Z" fill="#000"/><path d="M17.4 8.3 L21.2 12 H17.4 Z" fill="#fff"/><path d="M11.9 8.6 H15.6 M11.9 10.8 H15.2 M11.9 13.4 H19.8" stroke="#aaa" stroke-width="0.9"/><path d="M9.7 15.8 H27 L23 27 H6.7 Z" fill="#000"/></g></svg>
<svg style="left:860px;top:214px" width="35" height="34" viewBox="860 214 35 34"><g transform="translate(860,214)"><path d="M5 5 H24 L27.9 8.9 V27.9 H5 Z" fill="#000"/><rect x="9.7" y="6.3" width="12.4" height="7.4" fill="#e8e8e8"/><rect x="17.9" y="7.9" width="2.4" height="3.9" fill="#000"/><rect x="8.9" y="17.6" width="14.3" height="9.5" fill="#eee"/><path d="M11 19.7 H14.7 M11 21.6 H17.9" stroke="#555" stroke-width="0.8"/></g></svg>
<svg style="left:860px;top:268px" width="35" height="34" viewBox="860 268 35 34"><g transform="translate(860,268)"><path d="M6.8 5 H20.5 L26.8 11.3 V30 H6.8 Z" fill="#000"/><path d="M20 6.4 V11.3 H24.7 Z" fill="#fff"/><path d="M11 11 H15.8 M11 14.5 H22.1 M11 17.9 H22.1 M11 21.3 H22.1 M11 24.7 H22.1" stroke="#ddd" stroke-width="1.1"/></g></svg>
<svg style="left:860px;top:344px" width="35" height="36" viewBox="860 344 35 36"><path d="M872.1 349.4 H882 V363.2 H888.2 L876.9 375.6 L865.4 363.2 H872.1 Z" fill="#000"/></svg>
<svg style="left:860px;top:400px" width="35" height="36" viewBox="860 400 35 36"><path d="M876.9 405.2 L888.2 418 H882 V431.5 H872.1 V418 H865.4 Z" fill="#000"/></svg>
<svg style="left:860px;top:484px" width="35" height="32" viewBox="860 484 35 32"><g transform="translate(860,484)"><path d="M4.2 27.2 V5.4 H13.1 L17 9.4 H29.5 V27.2 Z" fill="#f4f4f4" stroke="#222" stroke-width="1.3" stroke-linejoin="round"/><path d="M17 11.6 H29.5" stroke="#444" stroke-width="1.1"/><path d="M6.2 8.2 H10.6 L15.8 17.3 L14.4 17.1 L17.8 25.7 L8.4 15.6 L11.6 15.1 Z" fill="#111"/><path d="M23 14.9 V23.3 M19.8 20 L23 23.3 L26.2 20" stroke="#333" stroke-width="1" fill="none"/></g></svg>
<svg style="left:860px;top:543px" width="35" height="32" viewBox="860 543 35 32"><g transform="translate(860,543)"><path d="M4.2 27.2 V5.4 H13.1 L17 9.4 H29.5 V27.2 Z" fill="#f4f4f4" stroke="#222" stroke-width="1.3" stroke-linejoin="round"/><path d="M17 11.6 H29.5" stroke="#444" stroke-width="1.1"/><path d="M6.2 8.2 H10.6 L15.8 17.3 L14.4 17.1 L17.8 25.7 L8.4 15.6 L11.6 15.1 Z" fill="#111"/><path d="M23 15 V23.3 M19.8 18.3 L23 15 L26.2 18.3" stroke="#333" stroke-width="1" fill="none"/></g></svg>
</body></html>
